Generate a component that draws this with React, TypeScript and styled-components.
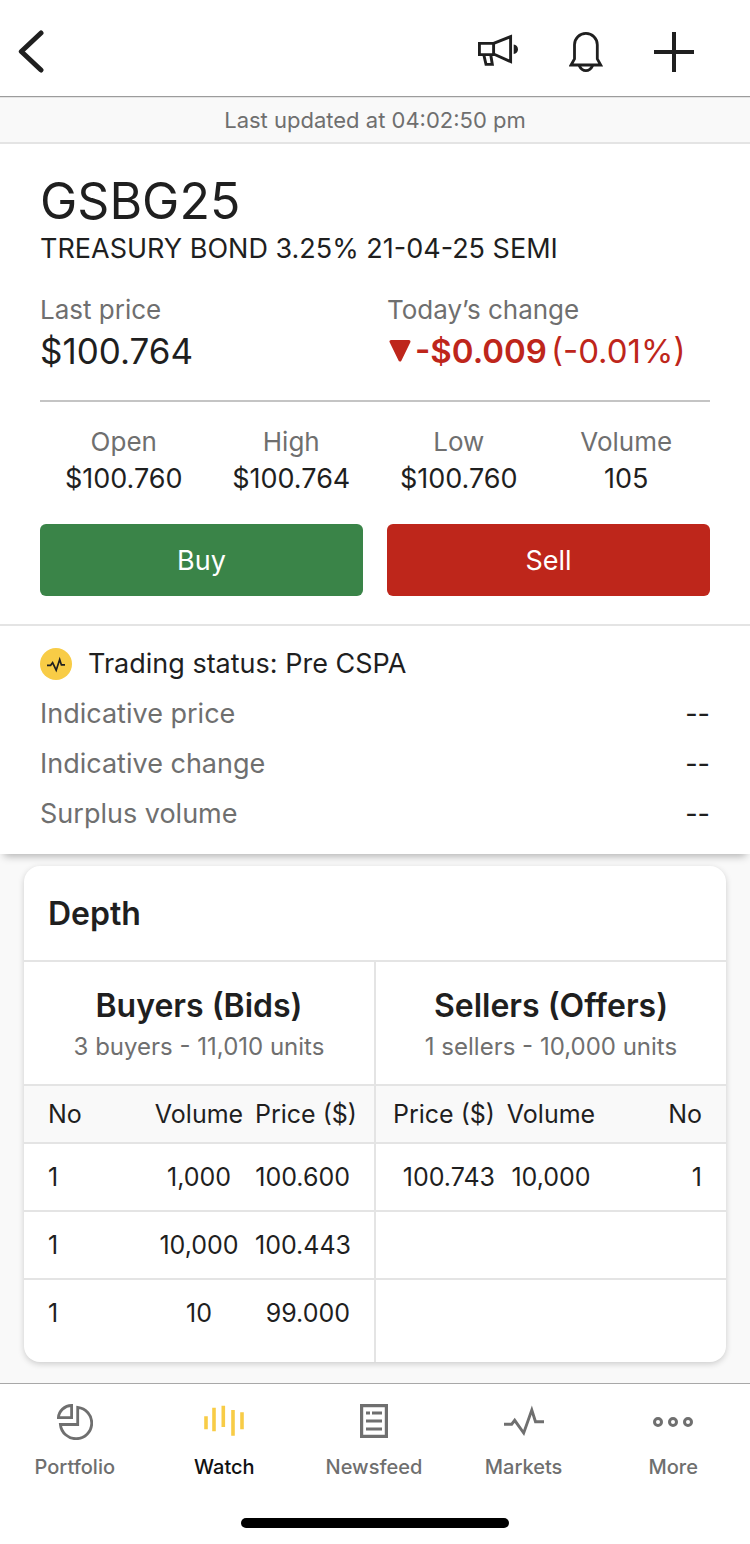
import React from 'react';
import styled, { createGlobalStyle } from 'styled-components';

const ink = '#1f1f1f';
const muted = '#6f6f6f';
const line = '#e4e4e4';
const surface = '#f9f9f9';
const red = '#be261b';
const green = '#3a8448';
const yellow = '#f8cc46';

const GlobalStyle = createGlobalStyle`
  *, *::before, *::after { box-sizing: border-box; }
  body {
    margin: 0;
    background: ${surface};
    color: ${ink};
    font-family: Inter, "Liberation Sans", sans-serif;
    font-size: 27px;
  }
  h1, h2, h3, p, dl, dd, dt { margin: 0; font-weight: 400; }
  button { font: inherit; color: inherit; cursor: pointer; }
`;

const Page = styled.div`
  display: flex;
  flex-direction: column;
  min-height: 100vh;
`;

const Header = styled.header`
  display: flex;
  align-items: center;
  justify-content: space-between;
  height: 97px;
  padding: 8px 36px 0 0;
  background: #fff;
  border-bottom: 1px solid #9c9c9c;
`;

const HeaderActions = styled.div`
  display: flex;
  align-items: center;
  gap: 8px;
`;

const IconButton = styled.button`
  display: flex;
  align-items: center;
  justify-content: center;
  width: 80px;
  height: 80px;
  padding: 0;
  border: 0;
  background: none;
`;

const BackButton = styled(IconButton)`
  width: 62px;
`;

const UpdatedBar = styled.p`
  padding: 7px 0 6px;
  border-top: 1px solid ${line};
  border-bottom: 2px solid ${line};
  background: ${surface};
  color: ${muted};
  font-size: 22px;
  line-height: 31px;
  text-align: center;
`;

const Summary = styled.section`
  padding: 25px 40px 28px;
  background: #fff;
`;

const Ticker = styled.h1`
  font-size: 50px;
  line-height: 64px;
`;

const SecurityName = styled.p`
  line-height: 32px;
`;

const PriceRow = styled.dl`
  display: grid;
  grid-template-columns: 1fr 1fr;
  column-gap: 24px;
  padding: 29px 0 24px;
  border-bottom: 2px solid #c4c4c4;
`;

const Label = styled.dt`
  color: ${muted};
  font-size: 26px;
  line-height: 32px;
`;

const Price = styled.dd<{ $down?: boolean }>`
  display: flex;
  align-items: center;
  font-size: ${(p) => (p.$down ? 33 : 35)}px;
  line-height: 50px;
  white-space: nowrap;
  color: ${(p) => (p.$down ? red : ink)};

  svg { margin: 0 4px 0 2px; }
  strong { margin-right: 4px; font-weight: 600; }
`;

const Stats = styled.dl`
  display: grid;
  grid-template-columns: repeat(4, 1fr);
  padding: 24px 0;
  text-align: center;
`;

const StatValue = styled.dd`
  line-height: 42px;
`;

const TradeActions = styled.div`
  display: grid;
  grid-template-columns: 1fr 1fr;
  gap: 24px;
`;

const TradeButton = styled.button<{ $tone: string }>`
  height: 72px;
  border: 0;
  border-radius: 6px;
  background: ${(p) => p.$tone};
  color: #fff;
`;

const Status = styled.section`
  padding: 13px 40px 15px;
  border-top: 2px solid ${line};
  background: #fff;
  box-shadow: 0 6px 8px -4px rgba(0, 0, 0, 0.3);
`;

const StatusTitle = styled.h2`
  display: flex;
  align-items: center;
  gap: 16px;
  font-size: 27px;
  line-height: 50px;
`;

const StatusRow = styled.div`
  display: flex;
  justify-content: space-between;
  line-height: 50px;
`;

const StatusLabel = styled.dt`
  color: ${muted};
`;

const DepthArea = styled.main`
  flex: 1;
  padding: 12px 24px 21px;
`;

const Card = styled.section`
  overflow: hidden;
  border-radius: 16px;
  background: #fff;
  box-shadow: 0 2px 6px rgba(0, 0, 0, 0.18);
`;

const CardTitle = styled.h2`
  padding: 24px 24px 22px;
  border-bottom: 2px solid ${line};
  font-size: 32px;
  font-weight: 600;
  line-height: 48px;
`;

const Sides = styled.div`
  display: flex;
`;

const Side = styled.div`
  flex: 1 1 0;
  min-width: 0;
  padding-bottom: 16px;

  & + & { border-left: 2px solid ${line}; }
`;

const SideHead = styled.div`
  padding: 24px 0 16px;
  border-bottom: 2px solid ${line};
  text-align: center;
`;

const SideTitle = styled.h3`
  font-size: 32px;
  font-weight: 600;
  line-height: 40px;
`;

const SideTotal = styled.p`
  color: ${muted};
  font-size: 24px;
  line-height: 42px;
`;

const Orders = styled.table`
  width: 100%;
  table-layout: fixed;
  border-collapse: separate;
  border-spacing: 0;
  font-size: 25px;

  tr:last-child > td { border-bottom: 0; height: 66px; }
`;

type CellProps = { $align: 'left' | 'center' | 'right'; $start?: number; $end?: number };

const HeadCell = styled.th<CellProps>`
  width: ${(p) => (p.$align === 'center' ? '32%' : '34%')};
  height: 58px;
  padding: 0 ${(p) => p.$end ?? 0}px 0 ${(p) => p.$start ?? 0}px;
  border-bottom: 2px solid ${line};
  background: ${surface};
  font-weight: 400;
  text-align: ${(p) => p.$align};
  white-space: nowrap;
`;

const Cell = styled.td<CellProps>`
  height: 68px;
  padding: 0 ${(p) => p.$end ?? 0}px 0 ${(p) => p.$start ?? 0}px;
  border-bottom: 2px solid ${line};
  text-align: ${(p) => p.$align};
  white-space: nowrap;
`;

const TabBar = styled.nav`
  padding-bottom: 16px;
  border-top: 1px solid #a8a8a8;
  background: #fff;
`;

const Tabs = styled.div`
  display: flex;
  padding-right: 2px;
`;

const Tab = styled.a<{ $active?: boolean }>`
  display: flex;
  flex: 1 1 0;
  flex-direction: column;
  align-items: center;
  gap: 12px;
  padding-top: 20px;
  color: ${(p) => (p.$active ? '#111' : muted)};
  font-size: 20px;
  font-weight: 500;
  line-height: 30px;
  text-decoration: none;
`;

const HomeIndicator = styled.div`
  width: 268px;
  height: 10px;
  margin: 36px auto 0;
  border-radius: 5px;
  background: #000;
`;

const BackIcon = () => (
  <svg width="26" height="44" viewBox="0 0 26 44" fill="none" stroke={ink} strokeWidth="5" strokeLinecap="round" strokeLinejoin="round" aria-hidden="true">
    <path d="M23 3 3.300 21.500 23 40" />
  </svg>
);

const MegaphoneIcon = () => (
  <svg width="40" height="40" viewBox="0 0 40 40" fill="none" stroke={ink} strokeWidth="2.9" aria-hidden="true">
    <path d="M1.4 11.4h14.2v11.2H1.4z" />
    <path d="M15.6 11.4 32.6 4.6v25L15.6 22" />
    <path d="M5.9 23.2 8 32.4h6.3l-1.6-9.8" />
    <path d="M35.7 12.4c2.6.3 4.3 2.2 4.3 4.8s-1.7 4.5-4.3 4.8z" fill={ink} stroke="none" />
  </svg>
);

const BellIcon = () => (
  <svg width="34" height="40" viewBox="0 0 34 40" fill="none" stroke={ink} strokeWidth="2.8" aria-hidden="true">
    <path d="M5.5 12.8a11.4 11.4 0 0 1 22.8 0V27l3.4 6H2.1l3.4-6z" />
    <path d="M10.2 33.6c1.5 3.2 4 5 6.700 5s5.200-1.800 6.700-5" />
  </svg>
);

const PlusIcon = () => (
  <svg width="40" height="40" viewBox="0 0 40 40" stroke={ink} strokeWidth="4" aria-hidden="true">
    <path d="M20 0v40M0 20h40" />
  </svg>
);

const DownIcon = () => (
  <svg width="22" height="24" viewBox="0 0 22 24" fill={red} stroke={red} strokeWidth="3" strokeLinejoin="round" aria-hidden="true">
    <path d="M2 2.5h18L11 21z" />
  </svg>
);

const StatusIcon = () => (
  <svg width="32" height="32" viewBox="0 0 32 32" fill="none" aria-hidden="true">
    <circle cx="16" cy="16" r="16" fill={yellow} />
    <path d="M7 17.3h3.600l2-2.600 3.600 7.500 3.500-10.600 1.700 5.300H25" stroke={ink} strokeWidth="1.7" />
  </svg>
);

const PortfolioIcon = () => (
  <svg width="36" height="36" viewBox="0 0 36 36" fill="none" stroke={muted} strokeWidth="2.8" aria-hidden="true">
    <path d="M14.6 1.4v12.300H1.400C1.800 7 7.500 1.600 14.600 1.400z" />
    <path d="M20.7 3.4A15.700 15.700 0 1 1 3.400 20.500h17.300z" />
  </svg>
);

const WatchIcon = () => (
  <svg width="40" height="36" viewBox="0 0 40 36" fill="none" stroke={yellow} strokeWidth="3.6" aria-hidden="true">
    <path d="M2 12.3v13M10 3.7v23.600M19.300 1.700V23M29 6v25.700M38 8.300v17" />
  </svg>
);

const NewsIcon = () => (
  <svg width="28" height="36" viewBox="0 0 28 36" fill="none" stroke={muted} strokeWidth="3.2" aria-hidden="true">
    <path d="M1.6 1.600h24.800v30.800H1.600z" />
    <path d="M6 9h4M12 9h10M6 17h16M6 25h16" />
  </svg>
);

const MarketsIcon = () => (
  <svg width="40" height="36" viewBox="0 0 40 36" fill="none" stroke={muted} strokeWidth="2.9" aria-hidden="true">
    <path d="M0 20.200h7.700l3-3.900L19.700 29 27.800 6l3.700 11.800H40" />
  </svg>
);

const MoreIcon = () => (
  <svg width="40" height="36" viewBox="0 0 40 36" fill="none" stroke={muted} strokeWidth="3" aria-hidden="true">
    <circle cx="5" cy="18" r="3.5" />
    <circle cx="20" cy="18" r="3.5" />
    <circle cx="35" cy="18" r="3.5" />
  </svg>
);

const stats = [
  ['Open', '$100.760'],
  ['High', '$100.764'],
  ['Low', '$100.760'],
  ['Volume', '105'],
];

const indicators = ['Indicative price', 'Indicative change', 'Surplus volume'];

const bids = [
  ['1', '1,000', '100.600'],
  ['1', '10,000', '100.443'],
  ['1', '10', '99.000'],
];

const offers = [
  ['100.743', '10,000', '1'],
  ['', '', ''],
  ['', '', ''],
];

const tabs = [
  { name: 'Portfolio', Icon: PortfolioIcon },
  { name: 'Watch', Icon: WatchIcon },
  { name: 'Newsfeed', Icon: NewsIcon },
  { name: 'Markets', Icon: MarketsIcon },
  { name: 'More', Icon: MoreIcon },
];

export default function App() {
  return (
    <Page>
      <GlobalStyle />
      <Header>
        <BackButton aria-label="Back"><BackIcon /></BackButton>
        <HeaderActions>
          <IconButton aria-label="Announcements"><MegaphoneIcon /></IconButton>
          <IconButton aria-label="Alerts"><BellIcon /></IconButton>
          <IconButton aria-label="Add"><PlusIcon /></IconButton>
        </HeaderActions>
      </Header>
      <UpdatedBar>Last updated at 04:02:50 pm</UpdatedBar>

      <Summary>
        <Ticker>GSBG25</Ticker>
        <SecurityName>TREASURY BOND 3.25% 21-04-25 SEMI</SecurityName>
        <PriceRow>
          <div>
            <Label>Last price</Label>
            <Price>$100.764</Price>
          </div>
          <div>
            <Label>Today’s change</Label>
            <Price $down>
              <DownIcon />
              <strong>-$0.009</strong>
              <span>(-0.01%)</span>
            </Price>
          </div>
        </PriceRow>
        <Stats>
          {stats.map(([label, value]) => (
            <div key={label}>
              <Label>{label}</Label>
              <StatValue>{value}</StatValue>
            </div>
          ))}
        </Stats>
        <TradeActions>
          <TradeButton $tone={green}>Buy</TradeButton>
          <TradeButton $tone={red}>Sell</TradeButton>
        </TradeActions>
      </Summary>

      <Status>
        <StatusTitle><StatusIcon />Trading status: Pre CSPA</StatusTitle>
        <dl>
          {indicators.map((label) => (
            <StatusRow key={label}>
              <StatusLabel>{label}</StatusLabel>
              <dd>--</dd>
            </StatusRow>
          ))}
        </dl>
      </Status>

      <DepthArea>
        <Card>
          <CardTitle>Depth</CardTitle>
          <Sides>
            <Side>
              <SideHead>
                <SideTitle>Buyers (Bids)</SideTitle>
                <SideTotal>3 buyers - 11,010 units</SideTotal>
              </SideHead>
              <Orders aria-label="Buyers">
                <thead>
                  <tr>
                    <HeadCell $align="left" $start={24}>No</HeadCell>
                    <HeadCell $align="center">Volume</HeadCell>
                    <HeadCell $align="right" $end={17}>Price ($)</HeadCell>
                  </tr>
                </thead>
                <tbody>
                  {bids.map(([count, volume, price]) => (
                    <tr key={price}>
                      <Cell $align="left" $start={24}>{count}</Cell>
                      <Cell $align="center">{volume}</Cell>
                      <Cell $align="right" $end={24}>{price}</Cell>
                    </tr>
                  ))}
                </tbody>
              </Orders>
            </Side>
            <Side>
              <SideHead>
                <SideTitle>Sellers (Offers)</SideTitle>
                <SideTotal>1 sellers - 10,000 units</SideTotal>
              </SideHead>
              <Orders aria-label="Sellers">
                <thead>
                  <tr>
                    <HeadCell $align="right">Price ($)</HeadCell>
                    <HeadCell $align="center">Volume</HeadCell>
                    <HeadCell $align="right" $end={24}>No</HeadCell>
                  </tr>
                </thead>
                <tbody>
                  {offers.map(([price, volume, count], row) => (
                    <tr key={row}>
                      <Cell $align="right">{price}</Cell>
                      <Cell $align="center">{volume}</Cell>
                      <Cell $align="right" $end={24}>{count}</Cell>
                    </tr>
                  ))}
                </tbody>
              </Orders>
            </Side>
          </Sides>
        </Card>
      </DepthArea>

      <TabBar aria-label="Main">
        <Tabs>
          {tabs.map(({ name, Icon }) => (
            <Tab key={name} href={`#${name.toLowerCase()}`} $active={name === 'Watch'}>
              <Icon />
              {name}
            </Tab>
          ))}
        </Tabs>
        <HomeIndicator />
      </TabBar>
    </Page>
  );
}
